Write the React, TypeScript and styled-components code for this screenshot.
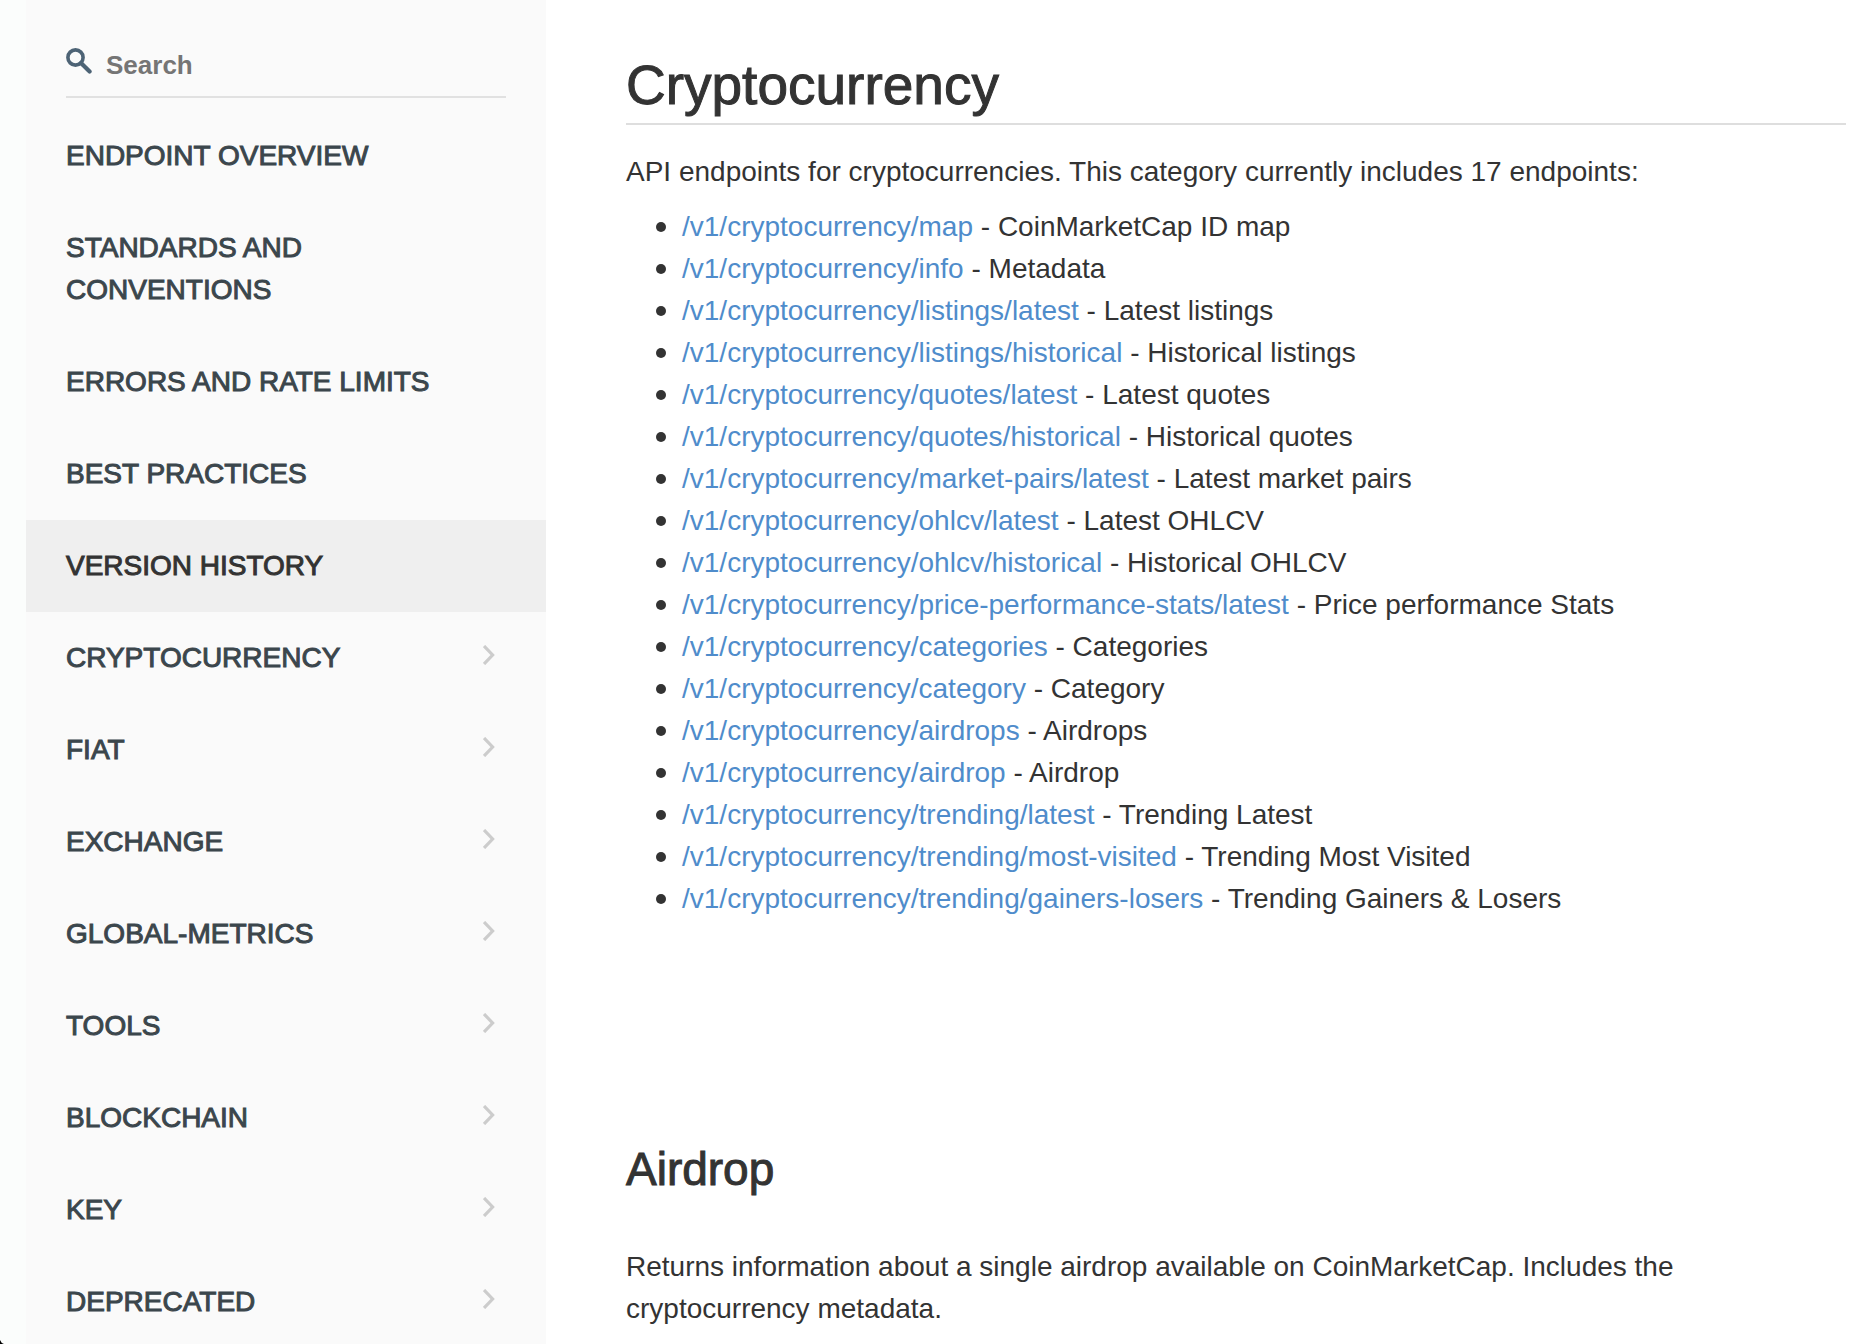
import React from "react";
import styled, { createGlobalStyle } from "styled-components";

const GlobalStyle = createGlobalStyle`
  *, *::before, *::after { box-sizing: border-box; }
  body {
    margin: 0;
    background: #ffffff;
    color: #333333;
    font-family: "Liberation Sans", Arial, sans-serif;
    font-size: 28px;
    line-height: 42px;
  }
`;

const Page = styled.div`
  display: flex;
  min-height: 100vh;
`;

const Gutter = styled.div`
  flex: 0 0 26px;
  background: #fbfdfc;
`;

const Corner = styled.svg`
  position: fixed;
  left: 0;
  bottom: 0;
`;

const Sidebar = styled.aside`
  flex: 0 0 520px;
  background: #fafafa;
`;

const SearchBox = styled.label`
  display: flex;
  align-items: flex-start;
  gap: 14px;
  margin: 48px 40px 12px;
  height: 50px;
  border-bottom: 2px solid #e1e1e1;
`;

const SearchIcon = styled.svg`
  flex: none;
`;

const SearchInput = styled.input`
  flex: 1;
  min-width: 0;
  height: 34px;
  padding: 0;
  border: 0;
  outline: 0;
  background: transparent;
  font: bold 26px/34px "Liberation Sans", Arial, sans-serif;
  color: #333333;
  &::placeholder { color: #757575; opacity: 1; }
`;

const NavList = styled.ul`
  list-style: none;
  margin: 0;
  padding: 0;
`;

const NavLink = styled.a<{ $active?: boolean }>`
  display: flex;
  justify-content: space-between;
  align-items: flex-start;
  padding: 25px 51px 25px 40px;
  text-transform: uppercase;
  text-decoration: none;
  color: ${(p) => (p.$active ? "#333333" : "#3b464c")};
  background: ${(p) => (p.$active ? "#efefef" : "transparent")};
  -webkit-text-stroke: 1px currentColor;
`;

const NavLabel = styled.span`
  max-width: 400px;
`;

const Chevron = styled.svg`
  flex: none;
  margin-top: 8px;
`;

const Main = styled.main`
  flex: 1;
  min-width: 0;
  padding: 55px 14px 0 80px;
`;

const Title = styled.h1`
  margin: 0 0 26px;
  padding-bottom: 8px;
  border-bottom: 2px solid #dedede;
  font-size: 55px;
  line-height: 60px;
  font-weight: 400;
  -webkit-text-stroke: 1px currentColor;
`;

const Subtitle = styled.h2`
  margin: 226px 0 54px;
  font-size: 46px;
  line-height: 46px;
  font-weight: 400;
  -webkit-text-stroke: 1px currentColor;
`;

const Text = styled.p`
  margin: 0;
`;

const EndpointList = styled.ul`
  list-style: none;
  margin: 13px 0 0;
  padding-left: 56px;
`;

const EndpointItem = styled.li`
  &::before {
    content: "";
    display: inline-block;
    width: 10px;
    height: 10px;
    margin: 0 16px 0 -26px;
    border-radius: 50%;
    background: currentColor;
    vertical-align: 4px;
  }
`;

const EndpointLink = styled.a`
  color: #4f8ccb;
  text-decoration: none;
`;

const navItems = [
  { label: "Endpoint Overview" },
  { label: "Standards and Conventions" },
  { label: "Errors and Rate Limits" },
  { label: "Best Practices" },
  { label: "Version History", active: true },
  { label: "Cryptocurrency", group: true },
  { label: "Fiat", group: true },
  { label: "Exchange", group: true },
  { label: "Global-Metrics", group: true },
  { label: "Tools", group: true },
  { label: "Blockchain", group: true },
  { label: "Key", group: true },
  { label: "Deprecated", group: true },
];

const endpoints = [
  ["map", "CoinMarketCap ID map"],
  ["info", "Metadata"],
  ["listings/latest", "Latest listings"],
  ["listings/historical", "Historical listings"],
  ["quotes/latest", "Latest quotes"],
  ["quotes/historical", "Historical quotes"],
  ["market-pairs/latest", "Latest market pairs"],
  ["ohlcv/latest", "Latest OHLCV"],
  ["ohlcv/historical", "Historical OHLCV"],
  ["price-performance-stats/latest", "Price performance Stats"],
  ["categories", "Categories"],
  ["category", "Category"],
  ["airdrops", "Airdrops"],
  ["airdrop", "Airdrop"],
  ["trending/latest", "Trending Latest"],
  ["trending/most-visited", "Trending Most Visited"],
  ["trending/gainers-losers", "Trending Gainers & Losers"],
];

export default function App() {
  return (
    <>
      <GlobalStyle />
      <Page>
        <Gutter />
        <Sidebar>
          <SearchBox>
            <SearchIcon width="26" height="26" viewBox="0 0 26 26" fill="none" stroke="#4d6375" aria-hidden="true">
              <circle cx="9.5" cy="9.5" r="7.6" strokeWidth="3.6" />
              <path d="M15 15L23.6 23.6" strokeWidth="4.2" strokeLinecap="round" />
            </SearchIcon>
            <SearchInput type="text" placeholder="Search" aria-label="Search" />
          </SearchBox>
          <nav>
            <NavList>
              {navItems.map((item) => (
                <li key={item.label}>
                  <NavLink href="#" $active={item.active}>
                    <NavLabel>{item.label}</NavLabel>
                    {item.group && (
                      <Chevron width="12" height="20" viewBox="0 0 12 20" fill="none" stroke="#cccccc" strokeWidth="3.2" aria-hidden="true">
                        <path d="M1 1L9.6 10L1 19" />
                      </Chevron>
                    )}
                  </NavLink>
                </li>
              ))}
            </NavList>
          </nav>
        </Sidebar>
        <Main>
          <Title>Cryptocurrency</Title>
          <Text>API endpoints for cryptocurrencies. This category currently includes 17 endpoints:</Text>
          <EndpointList>
            {endpoints.map(([path, name]) => (
              <EndpointItem key={path}>
                <EndpointLink href="#">/v1/cryptocurrency/{path}</EndpointLink> - {name}
              </EndpointItem>
            ))}
          </EndpointList>
          <Subtitle>Airdrop</Subtitle>
          <Text>
            Returns information about a single airdrop available on CoinMarketCap. Includes the cryptocurrency
            metadata.
          </Text>
        </Main>
        <Corner width="4" height="4" viewBox="0 0 4 4" aria-hidden="true">
          <path d="M0 0Q1 3 4 4H0Z" fill="#000000" />
        </Corner>
      </Page>
    </>
  );
}
